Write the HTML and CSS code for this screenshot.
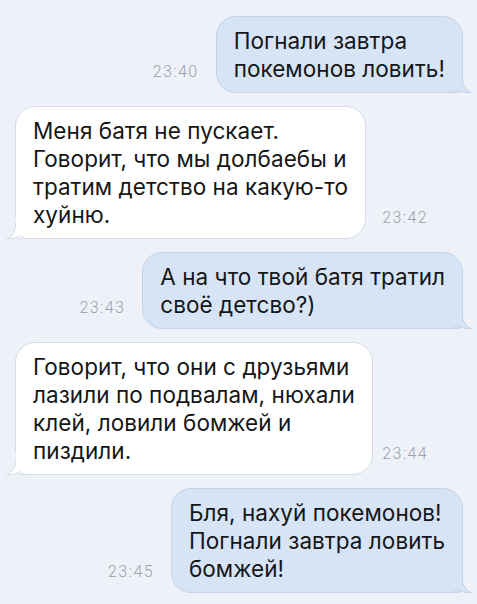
FILE: index.html
```html
<!DOCTYPE html>
<html lang="ru">
<head>
  <meta charset="UTF-8" />
  <meta name="viewport" content="width=device-width, initial-scale=1.0"/>
  <title>Чат</title>
  <link rel="stylesheet" href="styles.css">
</head>
<body>
  <div id="chat">
    <div class="row out">
      <span class="time">23:40</span>
      <div class="bubble">Погнали завтра<br>покемонов ловить!<svg class="tail" viewBox="0 0 20 22"><path class="tail-fill" d="M0 0H10.5V8C10.5 15 14 19.5 19.5 21.5C13 22 8.5 20.5 5.5 18.5C3.5 20 1.5 21 0 21.5Z"/><path class="tail-line" d="M10.5 6V8C10.5 15 14 19.5 19.5 21.5C13 22 8.5 20.5 5.5 18.5C3.5 20 1.5 21 0 21.5"/></svg></div>
    </div>
    <div class="row in">
      <div class="bubble">Меня батя не пускает.<br>Говорит, что мы долбаебы и<br>тратим детство на какую-то<br>хуйню.<svg class="tail" viewBox="0 0 20 22"><path class="tail-fill" d="M0 0H10.5V8C10.5 15 14 19.5 19.5 21.5C13 22 8.5 20.5 5.5 18.5C3.5 20 1.5 21 0 21.5Z"/><path class="tail-line" d="M10.5 6V8C10.5 15 14 19.5 19.5 21.5C13 22 8.5 20.5 5.5 18.5C3.5 20 1.5 21 0 21.5"/></svg></div>
      <span class="time">23:42</span>
    </div>
    <div class="row out">
      <span class="time">23:43</span>
      <div class="bubble">А на что твой батя тратил<br>своё детсво?)<svg class="tail" viewBox="0 0 20 22"><path class="tail-fill" d="M0 0H10.5V8C10.5 15 14 19.5 19.5 21.5C13 22 8.5 20.5 5.5 18.5C3.5 20 1.5 21 0 21.5Z"/><path class="tail-line" d="M10.5 6V8C10.5 15 14 19.5 19.5 21.5C13 22 8.5 20.5 5.5 18.5C3.5 20 1.5 21 0 21.5"/></svg></div>
    </div>
    <div class="row in">
      <div class="bubble">Говорит, что они с друзьями<br>лазили по подвалам, нюхали<br>клей, ловили бомжей и<br>пиздили.<svg class="tail" viewBox="0 0 20 22"><path class="tail-fill" d="M0 0H10.5V8C10.5 15 14 19.5 19.5 21.5C13 22 8.5 20.5 5.5 18.5C3.5 20 1.5 21 0 21.5Z"/><path class="tail-line" d="M10.5 6V8C10.5 15 14 19.5 19.5 21.5C13 22 8.5 20.5 5.5 18.5C3.5 20 1.5 21 0 21.5"/></svg></div>
      <span class="time">23:44</span>
    </div>
    <div class="row out">
      <span class="time">23:45</span>
      <div class="bubble">Бля, нахуй покемонов!<br>Погнали завтра ловить<br>бомжей!<svg class="tail" viewBox="0 0 20 22"><path class="tail-fill" d="M0 0H10.5V8C10.5 15 14 19.5 19.5 21.5C13 22 8.5 20.5 5.5 18.5C3.5 20 1.5 21 0 21.5Z"/><path class="tail-line" d="M10.5 6V8C10.5 15 14 19.5 19.5 21.5C13 22 8.5 20.5 5.5 18.5C3.5 20 1.5 21 0 21.5"/></svg></div>
    </div>
  </div>
</body>
</html>
```

FILE: styles.css
```css
* {
  box-sizing: border-box;
}
html, body {
  margin: 0;
  padding: 0;
  height: 100%;
  background: #eef2f8;
  font-family: Inter, "Liberation Sans", sans-serif;
  color: #161616;
}
#chat {
  display: flex;
  flex-direction: column;
  gap: 13px;
  padding-top: 16px;
}
.row {
  display: flex;
  align-items: flex-end;
}
.row.out {
  justify-content: flex-end;
  padding-right: 14px;
}
.row.in {
  justify-content: space-between;
  padding-left: 15px;
  padding-right: 49px;
}
.bubble {
  position: relative;
  padding: 10px 17px 9px 17px;
  border-radius: 20px;
  font-size: 22.5px;
  letter-spacing: 0.05px;
  line-height: 28px;
  white-space: nowrap;
}
.out .bubble {
  background: #d6e4f6;
  border: 1px solid #c4d3e7;
  border-bottom-right-radius: 6px;
}
.in .bubble {
  background: #fff;
  border: 1px solid #d6dce5;
  border-bottom-left-radius: 6px;
}
.time {
  font-family: Roboto, "Liberation Sans", sans-serif;
  font-weight: 300;
  font-size: 16px;
  letter-spacing: 1.4px;
  color: #9aa1ab;
  margin-bottom: 12px;
}
.out .time {
  margin-right: 17px;
}
.tail {
  position: absolute;
  bottom: -1px;
  width: 20px;
  height: 22px;
  overflow: visible;
}
.out .tail {
  right: -10px;
}
.in .tail {
  left: -10px;
  transform: scaleX(-1);
}
.tail-line {
  fill: none;
  stroke-width: 1;
}
.out .tail-fill { fill: #d6e4f6; }
.out .tail-line { stroke: #c4d3e7; }
.in .tail-fill { fill: #fff; }
.in .tail-line { stroke: #d6dce5; }
```
